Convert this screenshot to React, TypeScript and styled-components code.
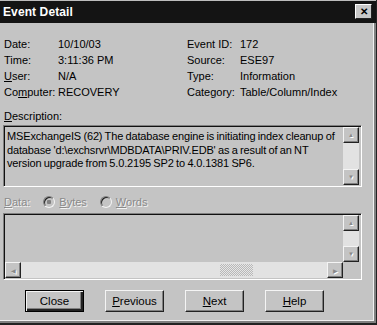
import styled, { createGlobalStyle } from "styled-components";

const Global = createGlobalStyle`
  html, body { margin: 0; padding: 0; background: #c4c4c4; }
  * { box-sizing: border-box; }
`;

const description = [
  "MSExchangeIS (62) The database engine is initiating index cleanup of",
  "database 'd:\\exchsrvr\\MDBDATA\\PRIV.EDB' as a result of an NT",
  "version upgrade from 5.0.2195 SP2 to 4.0.1381 SP6.",
];

export default function App() {
  return (
    <>
      <Global />
      <Window>
        <TitleBar>
          <Title>Event Detail</Title>
          <CloseBox>✕</CloseBox>
        </TitleBar>
        <Body>
          <InfoGrid>
            <Label>Date:</Label>
            <Value>10/10/03</Value>
            <Label>Event ID:</Label>
            <Value>172</Value>
            <Label>Time:</Label>
            <Value>3:11:36 PM</Value>
            <Label>Source:</Label>
            <Value>ESE97</Value>
            <Label><u>U</u>ser:</Label>
            <Value>N/A</Value>
            <Label>Type:</Label>
            <Value>Information</Value>
            <Label>Co<u>m</u>puter:</Label>
            <Value>RECOVERY</Value>
            <Label>Category:</Label>
            <Value>Table/Column/Index</Value>
          </InfoGrid>

          <SectionLabel><u>D</u>escription:</SectionLabel>
          <Sunken>
            <TextArea>
              {description.map((line) => (
                <Line key={line}>{line}</Line>
              ))}
            </TextArea>
            <VScroll>
              <ArrowBtn>▲</ArrowBtn>
              <Track />
              <ArrowBtn>▼</ArrowBtn>
            </VScroll>
          </Sunken>

          <DataRow>
            <Disabled><u>D</u>ata:</Disabled>
            <Radio $checked />
            <Disabled><u>B</u>ytes</Disabled>
            <Radio />
            <Disabled><u>W</u>ords</Disabled>
          </DataRow>

          <DataBox>
            <DataMain>
              <DataArea />
              <VScroll>
                <ArrowBtn>▲</ArrowBtn>
                <Track />
                <ArrowBtn>▼</ArrowBtn>
              </VScroll>
            </DataMain>
            <HScroll>
              <ArrowBtn>◀</ArrowBtn>
              <HTrack>
                <Thumb />
              </HTrack>
              <ArrowBtn>▶</ArrowBtn>
              <Corner />
            </HScroll>
          </DataBox>

          <Buttons>
            <Button $default>Close</Button>
            <Button><u>P</u>revious</Button>
            <Button><u>N</u>ext</Button>
            <Button><u>H</u>elp</Button>
          </Buttons>
        </Body>
      </Window>
    </>
  );
}

const Window = styled.div`
  width: 377px;
  height: 325px;
  background: #c4c4c4;
  border-right: 1px solid #222;
  border-bottom: 2px solid #222;
  box-shadow: inset -2px -2px 0 #808080, inset -3px -3px 0 #f0f0f0;
  font-family: "Liberation Sans", Arial, sans-serif;
  font-size: 11px;
  color: #000;
  overflow: hidden;
`;

const TitleBar = styled.div`
  height: 23px;
  background: #141414;
  border-top: 1px solid #bdbdbd;
  display: flex;
  align-items: center;
  justify-content: space-between;
  padding: 0 4px 0 3px;
`;

const Title = styled.span`
  color: #fff;
  font-weight: bold;
  font-size: 12px;
  letter-spacing: 0.1px;
`;

const CloseBox = styled.span`
  width: 17px;
  height: 15px;
  display: flex;
  align-items: center;
  justify-content: center;
  background: #c8c8c8;
  border: 1px solid;
  border-color: #fff #222 #222 #fff;
  font-size: 10px;
  font-weight: bold;
  color: #000;
  margin-top: -2px;
`;

const Body = styled.div`
  padding: 13px 0 0 3px;
  display: flex;
  flex-direction: column;
`;

const InfoGrid = styled.div`
  display: grid;
  grid-template-columns: 54px 129px 53px 1fr;
  grid-auto-rows: 16px;
  align-items: center;
  padding-left: 1px;
`;

const Label = styled.span`
  white-space: nowrap;
`;

const Value = styled.span`
  white-space: nowrap;
`;

const SectionLabel = styled.div`
  margin-top: 8px;
  height: 16px;
  line-height: 16px;
  padding-left: 1px;
`;

const Sunken = styled.div`
  width: 359px;
  height: 62px;
  margin-top: 1px;
  display: flex;
  border: 1px solid;
  border-color: #808080 #fff #fff #808080;
  box-shadow: inset 1px 1px 0 #111;
  padding: 1px 2px 1px 1px;
`;

const TextArea = styled.div`
  flex: 1;
  padding: 3px 0 0 2px;
  font-size: 11px;
  letter-spacing: -0.15px;
  word-spacing: -0.5px;
`;

const Line = styled.div`
  height: 13.5px;
  line-height: 13.5px;
  white-space: pre;
`;

const VScroll = styled.div`
  width: 16px;
  display: flex;
  flex-direction: column;
  background: #e2e2e2;
`;

const Track = styled.div`
  flex: 1;
`;

const ArrowBtn = styled.div`
  width: 16px;
  height: 16px;
  flex: none;
  display: flex;
  align-items: center;
  justify-content: center;
  background: #c4c4c4;
  border: 1px solid;
  border-color: #f4f4f4 #222 #222 #f4f4f4;
  box-shadow: inset -1px -1px 0 #808080;
  font-size: 6px;
  color: #8a8a8a;
  text-shadow: 1px 1px 0 #fff;
`;

const DataRow = styled.div`
  margin-top: 7px;
  height: 16px;
  display: flex;
  align-items: center;
  padding-left: 1px;
`;

const Disabled = styled.span`
  color: #8a8a8a;
  text-shadow: 1px 1px 0 #f4f4f4;
  margin-right: 7px;
`;

const Radio = styled.span<{ $checked?: boolean }>`
  width: 12px;
  height: 12px;
  border-radius: 50%;
  margin: 0 4px 0 6px;
  border: 1px solid;
  border-color: #808080 #f4f4f4 #f4f4f4 #808080;
  background: ${(p) =>
    p.$checked
      ? "radial-gradient(circle, #808080 0 2px, #c4c4c4 2.5px)"
      : "#c4c4c4"};
  box-shadow: inset 1px 1px 0 #222;
`;

const DataBox = styled.div`
  width: 359px;
  height: 67px;
  margin-top: 3px;
  display: flex;
  flex-direction: column;
  border: 1px solid;
  border-color: #808080 #fff #fff #808080;
  box-shadow: inset 1px 1px 0 #111;
  padding: 1px 2px 1px 1px;
`;

const DataMain = styled.div`
  flex: 1;
  display: flex;
`;

const DataArea = styled.div`
  flex: 1;
`;

const HScroll = styled.div`
  height: 16px;
  display: flex;
  background: #e2e2e2;
`;

const HTrack = styled.div`
  flex: 1;
  position: relative;
`;

const Thumb = styled.div`
  position: absolute;
  left: 199px;
  top: 2px;
  width: 33px;
  height: 12px;
  background: repeating-conic-gradient(#b8b8b8 0 25%, #e6e6e6 0 50%) 0 0 / 2px 2px;
`;

const Corner = styled.div`
  width: 16px;
  background: #c4c4c4;
`;

const Buttons = styled.div`
  margin-top: 10px;
  padding-left: 22px;
  display: flex;
  gap: 21px;
`;

const Button = styled.div<{ $default?: boolean }>`
  width: 59px;
  height: 22px;
  display: flex;
  align-items: center;
  justify-content: center;
  background: #c4c4c4;
  font-size: 11.5px;
  border: 1px solid;
  border-color: ${(p) => (p.$default ? "#000" : "#f4f4f4 #222 #222 #f4f4f4")};
  box-shadow: ${(p) =>
    p.$default
      ? "inset 1px 1px 0 #f4f4f4, inset -2px -2px 0 #222, inset -3px -3px 0 #808080"
      : "inset -1px -1px 0 #808080"};
`;
